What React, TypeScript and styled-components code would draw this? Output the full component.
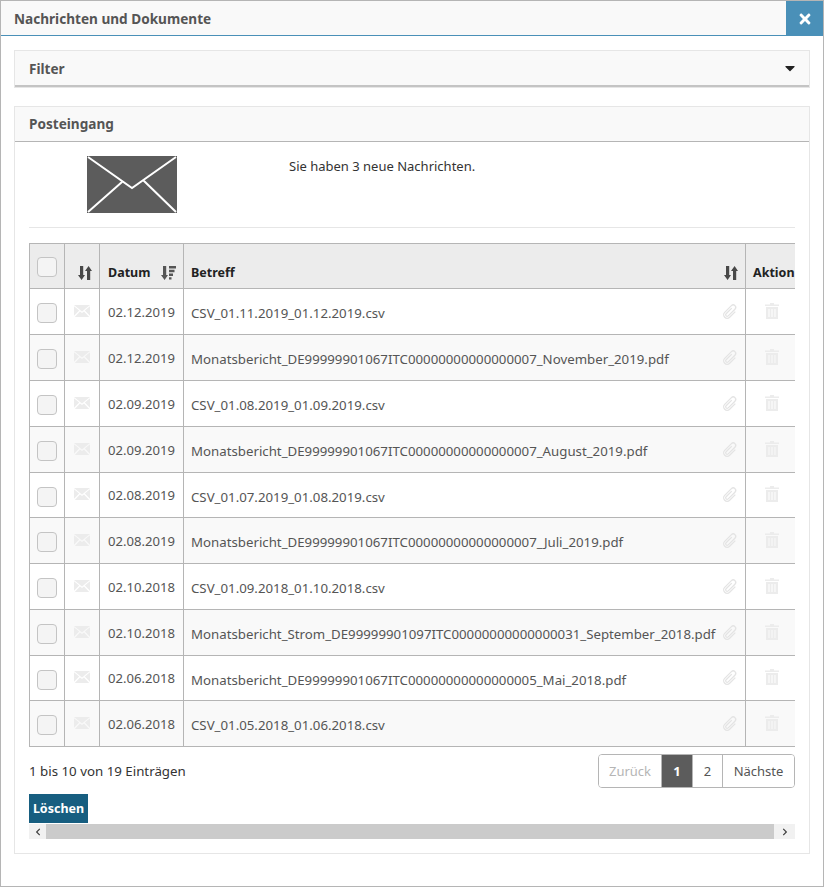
import React from "react";
import styled, { createGlobalStyle } from "styled-components";
import { FaTimes, FaCaretDown, FaChevronLeft, FaChevronRight } from "react-icons/fa";

type Message = { date: string; subject: string; height: number };

const messages: Message[] = [
  { date: "02.12.2019", subject: "CSV_01.11.2019_01.12.2019.csv", height: 46 },
  { date: "02.12.2019", subject: "Monatsbericht_DE99999901067ITC00000000000000007_November_2019.pdf", height: 46 },
  { date: "02.09.2019", subject: "CSV_01.08.2019_01.09.2019.csv", height: 46 },
  { date: "02.09.2019", subject: "Monatsbericht_DE99999901067ITC00000000000000007_August_2019.pdf", height: 46 },
  { date: "02.08.2019", subject: "CSV_01.07.2019_01.08.2019.csv", height: 45 },
  { date: "02.08.2019", subject: "Monatsbericht_DE99999901067ITC00000000000000007_Juli_2019.pdf", height: 46 },
  { date: "02.10.2018", subject: "CSV_01.09.2018_01.10.2018.csv", height: 46 },
  { date: "02.10.2018", subject: "Monatsbericht_Strom_DE99999901097ITC00000000000000031_September_2018.pdf", height: 46 },
  { date: "02.06.2018", subject: "Monatsbericht_DE99999901067ITC00000000000000005_Mai_2018.pdf", height: 45 },
  { date: "02.06.2018", subject: "CSV_01.05.2018_01.06.2018.csv", height: 46 },
];

const GlobalStyle = createGlobalStyle`
  html, body {
    margin: 0;
    padding: 0;
    background: #fff;
  }
  body {
    font-family: "Noto Sans", "Liberation Sans", sans-serif;
    font-size: 13px;
    color: #333;
  }
  * {
    box-sizing: border-box;
  }
`;

const Modal = styled.div`
  width: 824px;
  height: 887px;
  border: 1px solid #b5b5b5;
  background: #fff;
  overflow: hidden;
`;

const ModalHeader = styled.div`
  display: flex;
  justify-content: space-between;
  height: 35px;
  background: #f9f9f9;
  border-bottom: 1px solid #4a90b8;
`;

const ModalTitle = styled.h1`
  margin: 0;
  padding-left: 13px;
  font-size: 13.6px;
  font-weight: 700;
  line-height: 35px;
  color: #555;
`;

const CloseButton = styled.div`
  display: flex;
  justify-content: center;
  align-items: center;
  width: 37px;
  height: 35px;
  color: #fff;
  background: #4a90b8;
  font-size: 16px;
`;

const ModalBody = styled.div`
  padding: 14px 13px 0;
`;

const Panel = styled.section`
  border: 1px solid #e6e6e6;
  margin-bottom: 18px;
`;

const PanelHeader = styled.div<{ $height: number; $border: string; $lift?: number }>`
  display: flex;
  justify-content: space-between;
  align-items: center;
  height: ${(p) => p.$height}px;
  padding: 0 14px ${(p) => p.$lift ?? 0}px;
  background: #f9f9f9;
  border-bottom: ${(p) => p.$border};
  font-size: 13.6px;
  font-weight: 700;
  color: #555;
`;

const FilterCaret = styled(FaCaretDown)`
  font-size: 16px;
  color: #222;
  margin-right: -3px;
`;

const PanelContent = styled.div`
  padding: 14px 14px 14px;
`;

const Intro = styled.div`
  display: flex;
  height: 72px;
  border-bottom: 1px solid #e6e6e6;
  margin-bottom: 15px;
`;

const EnvelopeBox = styled.div`
  width: 260px;
  padding-left: 58px;
`;

const IntroText = styled.p`
  margin: 1px 0 0;
  font-size: 13px;
  line-height: 18px;
  color: #333;
`;

const TableClip = styled.div`
  width: 766px;
  overflow: hidden;
`;

const Table = styled.div`
  width: 790px;
  border-top: 1px solid #b5b5b5;
  border-left: 1px solid #b5b5b5;
`;

const Row = styled.div<{ $height: number; $kind: "head" | "odd" | "even" }>`
  display: grid;
  grid-template-columns: 35px 35px 84px 562px 74px;
  height: ${(p) => p.$height}px;
  background: ${(p) => (p.$kind === "head" ? "#ececec" : p.$kind === "even" ? "#f9f9f9" : "#fff")};
  border-bottom: 1px solid #b5b5b5;
`;

const Cell = styled.div<{ $center?: boolean }>`
  display: flex;
  align-items: center;
  justify-content: ${(p) => (p.$center ? "center" : "flex-start")};
  padding: ${(p) => (p.$center ? "0" : "0 7px")};
  border-right: 1px solid #b5b5b5;
  min-width: 0;
  white-space: nowrap;
`;

const HeadCell = styled(Cell)`
  justify-content: space-between;
  padding-top: 13px;
  font-size: 12.5px;
  font-weight: 700;
  color: #222;
`;

const HeadDate = styled(HeadCell)`
  padding-left: 8px;
`;

const HeadAction = styled(HeadCell)`
  border-right: 0;
`;

const HeadCenter = styled(HeadCell)`
  justify-content: center;
  padding: 13px 0 0 6px;
`;

const CheckBox = styled.span`
  display: block;
  width: 20px;
  height: 20px;
  background: #f4f4f4;
  border: 1px solid #c4c4c4;
  border-radius: 4px;
`;

const HeadCheckCell = styled(Cell)`
  padding-top: 2px;
`;

const CheckCell = styled(Cell)`
  padding-top: 3px;
`;

const DateCell = styled(Cell)`
  padding-left: 8px;
`;

const DateText = styled.span`
  font-size: 13.1px;
  color: #555;
`;

const SubjectCell = styled(Cell)`
  justify-content: space-between;
`;

const SubjectText = styled.span`
  padding-top: 3px;
  font-size: 13.25px;
  color: #555;
`;

const TrashCell = styled(Cell)`
  justify-content: flex-start;
  padding-left: 19px;
  border-right: 0;
`;

const MutedIcon = styled.span`
  display: inline-flex;
  color: #ececec;
  padding-bottom: 2px;
`;

const Footer = styled.div`
  display: flex;
  justify-content: space-between;
  padding-top: 7px;
`;

const InfoText = styled.div`
  padding-top: 8px;
  font-size: 13.3px;
  color: #333;
`;

const Pagination = styled.nav`
  display: flex;
  height: 34px;
  border: 1px solid #b5b5b5;
  border-radius: 4px;
  overflow: hidden;
`;

const PageItem = styled.span<{ $active?: boolean; $disabled?: boolean; $width: number }>`
  display: flex;
  justify-content: center;
  align-items: center;
  width: ${(p) => p.$width}px;
  border-right: 1px solid #b5b5b5;
  font-size: 13px;
  font-weight: ${(p) => (p.$active ? 700 : 400)};
  color: ${(p) => (p.$active ? "#fff" : p.$disabled ? "#b5b5b5" : "#555")};
  background: ${(p) => (p.$active ? "#5c5c5c" : "#fff")};
  &:last-child {
    border-right: 0;
  }
`;

const DeleteButton = styled.button`
  display: block;
  width: 59px;
  height: 29px;
  margin: 6px 0 1px;
  padding: 0;
  border: 0;
  background: #175e80;
  color: #fff;
  font-family: inherit;
  font-size: 12.5px;
  font-weight: 700;
`;

const ScrollBar = styled.div`
  display: flex;
  height: 15px;
  background: #f1f1f1;
`;

const ScrollArrow = styled.span<{ $width: number }>`
  display: flex;
  justify-content: center;
  align-items: center;
  width: ${(p) => p.$width}px;
  font-size: 8px;
  color: #404040;
`;

const ScrollThumb = styled.div`
  flex: 1;
  background: #cbcbcb;
`;

const SortIcon = () => (
  <svg width="14" height="14" viewBox="0 0 14 14" fill="#484848">
    <path d="M2 0h3.200v9H7l-3.400 5L0 9h2z" />
    <path d="M9 14h3.200V5H14l-3.400-5L7 5h2z" />
  </svg>
);

const SortDescIcon = () => (
  <svg width="15" height="14" viewBox="0 0 15 14" fill="#555">
    <path d="M2 0h3.200v9H7l-3.400 5L0 9h2z" />
    <path d="M8 0h7v2.400H8zM8 3.800h5.500v2.400H8zM8 7.600h4v2.400H8zM8 11.200h2.500v2.400H8z" />
  </svg>
);

const MailIcon = () => (
  <svg width="16" height="12" viewBox="0 0 16 12" fill="currentColor">
    <path d="M0 0h16L8 6.500z" />
    <path d="M0 1.200v9.600L5.200 5.500zM16 1.200v9.600L10.800 5.500z" />
    <path d="M0.800 12h14.400L10 6.500 8 8 6 6.500z" />
  </svg>
);

const ClipIcon = () => (
  <svg width="16" height="16" viewBox="0 0 16 16" fill="none" stroke="#e4e4e4" strokeWidth="1.300" style={{ flex: "none", overflow: "visible" }}>
    <g transform="rotate(45 8 8)">
      <path d="M6.500 4v8a1.500 1.500 0 0 0 3 0V2.500a2.500 2.500 0 0 0-5 0V12a3.500 3.500 0 0 0 7 0V4" />
    </g>
  </svg>
);

const TrashIcon = () => (
  <svg width="14" height="16" viewBox="0 0 14 16" fill="currentColor" fillRule="evenodd">
    <path d="M5 0h4v1.500h5V3H0V1.500h5z" />
    <path d="M1 4h12v12H1zM3.500 6v8h1V6zM6.500 6v8h1V6zM9.500 6v8h1V6z" />
  </svg>
);

const BigEnvelope = () => (
  <svg width="90" height="57" viewBox="0 0 90 57" style={{ display: "block" }}>
    <rect width="90" height="57" fill="#5c5c5c" />
    <path d="M1 1l44 31L89 1M1 56l34-30M89 56L56 24" fill="none" stroke="#fff" strokeWidth="2" />
  </svg>
);

const App = () => {
  return (
    <>
      <GlobalStyle />
      <Modal>
        <ModalHeader>
          <ModalTitle>Nachrichten und Dokumente</ModalTitle>
          <CloseButton>
            <FaTimes />
          </CloseButton>
        </ModalHeader>
        <ModalBody>
          <Panel>
            <PanelHeader $height={36} $border="2px solid #c4c4c4">
              Filter
              <FilterCaret />
            </PanelHeader>
          </Panel>
          <Panel>
            <PanelHeader $height={35} $border="1px solid #b5b5b5" $lift={2}>
              Posteingang
            </PanelHeader>
            <PanelContent>
              <Intro>
                <EnvelopeBox>
                  <BigEnvelope />
                </EnvelopeBox>
                <IntroText>Sie haben 3 neue Nachrichten.</IntroText>
              </Intro>
              <TableClip>
                <Table>
                  <Row $kind="head" $height={45}>
                    <HeadCheckCell $center>
                      <CheckBox />
                    </HeadCheckCell>
                    <HeadCenter>
                      <SortIcon />
                    </HeadCenter>
                    <HeadDate>
                      Datum
                      <SortDescIcon />
                    </HeadDate>
                    <HeadCell>
                      Betreff
                      <SortIcon />
                    </HeadCell>
                    <HeadAction>Aktion</HeadAction>
                  </Row>
                  {messages.map((message, index) => (
                    <Row key={index} $height={message.height} $kind={index % 2 === 0 ? "odd" : "even"}>
                      <CheckCell $center>
                        <CheckBox />
                      </CheckCell>
                      <Cell $center>
                        <MutedIcon>
                          <MailIcon />
                        </MutedIcon>
                      </Cell>
                      <DateCell>
                        <DateText>{message.date}</DateText>
                      </DateCell>
                      <SubjectCell>
                        <SubjectText>{message.subject}</SubjectText>
                        <ClipIcon />
                      </SubjectCell>
                      <TrashCell>
                        <MutedIcon>
                          <TrashIcon />
                        </MutedIcon>
                      </TrashCell>
                    </Row>
                  ))}
                </Table>
              </TableClip>
              <Footer>
                <InfoText>1 bis 10 von 19 Einträgen</InfoText>
                <Pagination>
                  <PageItem $disabled $width={63}>Zurück</PageItem>
                  <PageItem $active $width={31}>1</PageItem>
                  <PageItem $width={30}>2</PageItem>
                  <PageItem $width={71}>Nächste</PageItem>
                </Pagination>
              </Footer>
              <DeleteButton>Löschen</DeleteButton>
              <ScrollBar>
                <ScrollArrow $width={17}>
                  <FaChevronLeft />
                </ScrollArrow>
                <ScrollThumb />
                <ScrollArrow $width={21}>
                  <FaChevronRight />
                </ScrollArrow>
              </ScrollBar>
            </PanelContent>
          </Panel>
        </ModalBody>
      </Modal>
    </>
  );
};

export default App;
